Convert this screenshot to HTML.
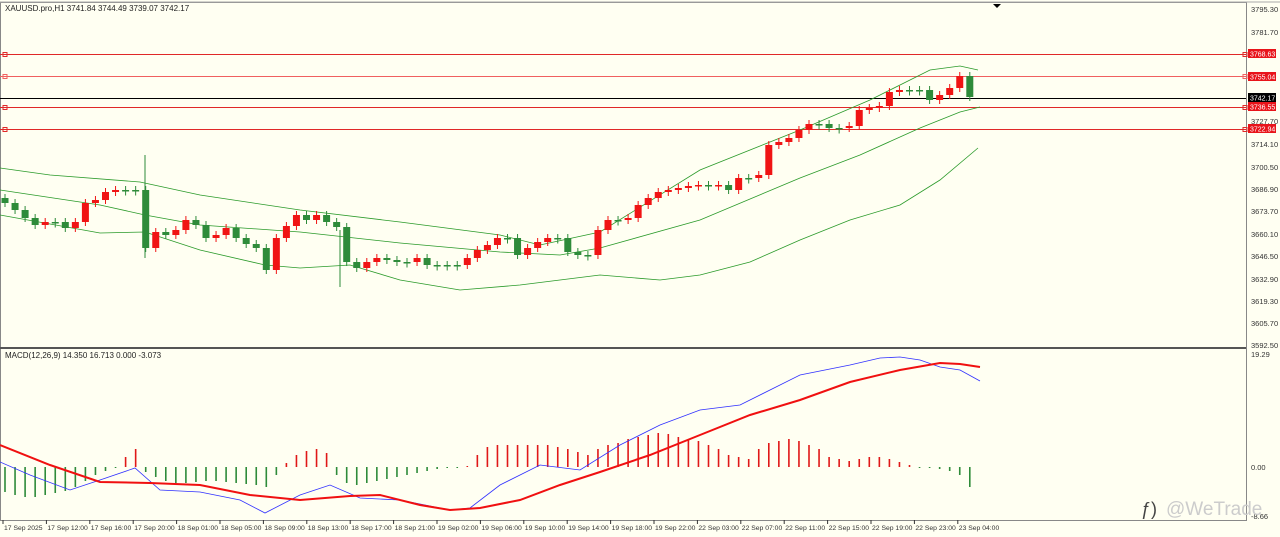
<!DOCTYPE html><html><head><meta charset="utf-8"><style>
body{margin:0;width:1280px;height:537px;background:#fffff2;overflow:hidden;font-family:"Liberation Sans",sans-serif}
svg{position:absolute;left:0;top:0}
</style></head><body>
<svg id="s" width="1280" height="537" xmlns="http://www.w3.org/2000/svg" font-family="Liberation Sans, sans-serif" font-size="8">
<rect width="1280" height="537" fill="#fffff2"/>
<rect x="0.5" y="2.5" width="1246" height="518" fill="none" stroke="#888" stroke-width="1"/>
<line x1="0" y1="348" x2="1246" y2="348" stroke="#555" stroke-width="2"/>
<line x1="0" y1="2" x2="1280" y2="2" stroke="#aaa"/>
<polygon points="993,4 1001,4 997,8" fill="#000"/>
<text x="5" y="11" fill="#222">XAUUSD.pro,H1  3741.84 3744.49 3739.07 3742.17</text>
<text x="5" y="358" fill="#222">MACD(12,26,9) 14.350 16.713 0.000 -3.073</text>
<g id="g"></g>
<g fill="#333" font-size="7.5">
<text x="1251" y="12">3795.30</text><text x="1251" y="35">3781.70</text>
<text x="1251" y="124">3727.70</text><text x="1251" y="147">3714.10</text>
<text x="1251" y="170">3700.50</text><text x="1251" y="192">3686.90</text>
<text x="1251" y="214">3673.70</text><text x="1251" y="237">3660.10</text>
<text x="1251" y="259">3646.50</text><text x="1251" y="282">3632.90</text>
<text x="1251" y="304">3619.30</text><text x="1251" y="326">3605.70</text>
<text x="1251" y="348">3592.50</text><text x="1251" y="357">19.29</text>
<text x="1251" y="470">0.00</text><text x="1251" y="519">-8.66</text>
</g>
<g font-size="7" fill="#fff">
<rect x="1248" y="49" width="28" height="9" fill="#e8141a"/><text x="1250" y="56.5">3768.63</text>
<rect x="1248" y="72" width="28" height="9" fill="#e8141a"/><text x="1250" y="79.5">3755.04</text>
<rect x="1248" y="93" width="28" height="9" fill="#000"/><text x="1250" y="100.5">3742.17</text>
<rect x="1248" y="102" width="28" height="9" fill="#e8141a"/><text x="1250" y="109.5">3736.55</text>
<rect x="1248" y="124" width="28" height="9" fill="#e8141a"/><text x="1250" y="131.5">3722.94</text>
</g>
<g id="t" font-size="6.8" fill="#333"></g>
<text x="1166" y="515" font-size="19" fill="#ccc">@WeTrade</text>
<text x="1141" y="515" font-size="18" fill="#444">ƒ)</text>
</svg>
<script>
(function(){
var g=document.getElementById('g'),h='';
function L(y,c){h+='<line x1="0" y1="'+y+'" x2="1246" y2="'+y+'" stroke="'+c+'"/><rect x="3" y="'+(y-2)+'" width="4" height="4" fill="none" stroke="'+c+'"/><rect x="1243" y="'+(y-2)+'" width="4" height="4" fill="none" stroke="'+c+'"/>';}
L(54.5,'#e02828');L(76.5,'#f06060');L(107.5,'#e02828');L(129.5,'#e02828');
h+='<line x1="0" y1="98.5" x2="1246" y2="98.5" stroke="#000"/>';
function P(pts,c,w){h+='<polyline fill="none" stroke="'+c+'" stroke-width="'+w+'" points="'+pts+'"/>';}
P("0,168 50,175 140,182 200,195 300,210 400,222 500,235 540,245 600,232 700,170 800,130 870,100 930,70 960,66 978,70","#2a9a2a",0.8);
P("0,190 100,205 145,215 200,225 300,232 400,243 500,252 560,255 600,248 700,220 800,178 860,155 920,128 960,112 980,107","#2a9a2a",0.8);
P("0,215 100,233 145,232 200,250 265,265 300,268 350,265 400,280 460,290 520,285 600,275 660,280 700,275 750,262 800,240 850,220 900,205 940,180 978,148","#2a9a2a",0.8);
var c=[203,210,218,225,222,222,228,222,203,200,192,190,190,190,248,232,235,230,220,225,238,235,228,238,244,248,270,238,226,215,220,215,222,227,262,268,262,258,260,262,262,258,265,265,265,265,258,250,245,238,238,255,248,242,238,238,252,255,255,230,220,220,218,205,198,192,190,188,186,185,186,185,190,178,178,175,145,142,138,130,124,124,128,128,126,110,108,106,92,90,90,90,100,95,88,76,97];
var prev=198;
for(var i=0;i<c.length;i++){var x=5+i*10.05,o=prev,cl=c[i];var up=cl<o;var col=up?'#f01414':'#2e8b3a';
var tp=Math.min(o,cl),bt=Math.max(o,cl);if(bt-tp<1.5)bt=tp+1.5;
h+='<line x1="'+x+'" y1="'+(tp-4)+'" x2="'+x+'" y2="'+(bt+4)+'" stroke="'+col+'"/><rect x="'+(x-3.5)+'" y="'+tp+'" width="7" height="'+(bt-tp)+'" fill="'+col+'"/>';prev=cl;}
h+='<line x1="145" y1="155" x2="145" y2="258" stroke="#2e8b3a"/><line x1="340" y1="230" x2="340" y2="287" stroke="#2e8b3a"/>';
var hv=[-25,-28,-30,-30,-28,-26,-24,-20,-14,-8,-4,0,10,18,-5,-10,-14,-16,-16,-15,-14,-14,-15,-16,-17,-18,-20,-8,4,12,16,18,14,-8,-16,-18,-16,-14,-12,-10,-8,-6,-4,-2,-1,0,1,12,20,22,22,22,22,22,22,20,18,15,12,18,22,24,28,30,32,34,33,30,28,26,22,18,12,10,8,18,24,26,28,26,22,18,10,8,6,8,10,10,8,5,2,0,-1,-2,-4,-8,-20];
for(var i=0;i<hv.length;i++){var x=5+i*10.05,v=hv[i],col=v>0?'#e01818':'#2e8b3a';h+='<rect x="'+(x-0.8)+'" y="'+(v>0?467-v:467)+'" width="1.6" height="'+Math.max(Math.abs(v),1)+'" fill="'+col+'"/>';}
P("0,462 30,475 70,490 100,480 135,468 160,490 200,492 240,500 265,513 300,495 330,485 360,498 400,500 450,510 470,508 500,485 540,465 580,470 620,445 660,425 700,410 740,405 800,375 850,365 880,358 900,357 920,360 940,367 960,370 980,381","#3030ff",0.8);
P("0,445 50,465 100,482 150,483 200,485 250,495 300,500 350,496 380,495 420,505 450,510 480,508 520,500 560,485 600,472 650,455 700,435 750,415 800,400 850,382 900,370 940,363 960,364 980,367","#f01010",2);
g.innerHTML=h;
var lb=["17 Sep 2025","17 Sep 12:00","17 Sep 16:00","17 Sep 20:00","18 Sep 01:00","18 Sep 05:00","18 Sep 09:00","18 Sep 13:00","18 Sep 17:00","18 Sep 21:00","19 Sep 02:00","19 Sep 06:00","19 Sep 10:00","19 Sep 14:00","19 Sep 18:00","19 Sep 22:00","22 Sep 03:00","22 Sep 07:00","22 Sep 11:00","22 Sep 15:00","22 Sep 19:00","22 Sep 23:00","23 Sep 04:00"],t='';
for(var i=0;i<lb.length;i++){var x=3+i*43.4;t+='<text x="'+(x+1)+'" y="530">'+lb[i]+'</text><line x1="'+x+'" y1="520" x2="'+x+'" y2="524" stroke="#333"/>';}
document.getElementById('t').innerHTML=t;
})();
</script>
</body></html>
